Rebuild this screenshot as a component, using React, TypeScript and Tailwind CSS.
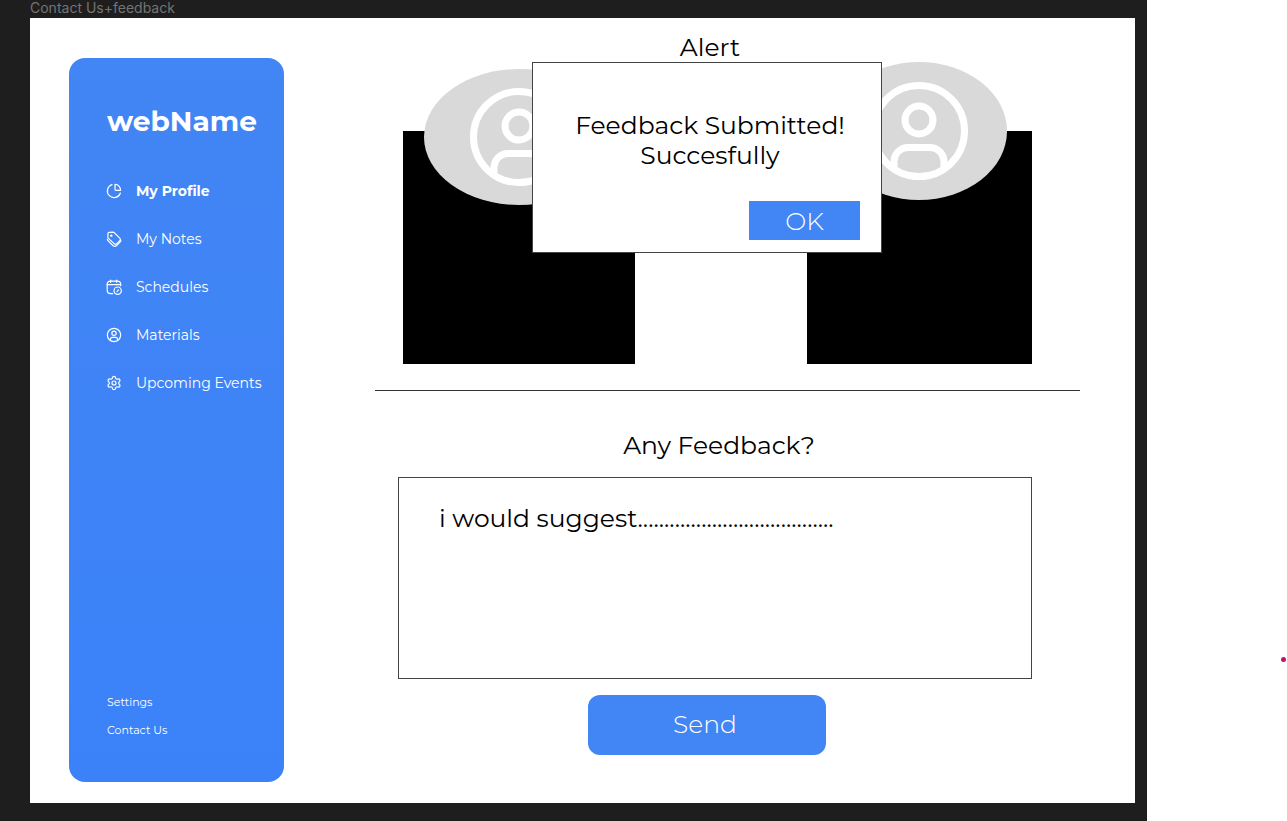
import type { ReactNode } from "react";

function Icon({ children }: { children: ReactNode }) {
  return (
    <svg
      viewBox="0 0 24 24"
      className="size-4 shrink-0"
      fill="none"
      stroke="currentColor"
      strokeWidth="1.8"
      strokeLinecap="round"
      strokeLinejoin="round"
      aria-hidden="true"
    >
      {children}
    </svg>
  );
}

const links = [
  {
    label: "My Profile",
    icon: (
      <>
        <path d="M9 2.400A10 10 0 1 0 21.600 15" />
        <path d="M21.800 11c0-5.300-3.500-8.800-8.300-8.800v7.300c0 1 .5 1.500 1.500 1.500z" />
      </>
    ),
  },
  {
    label: "My Notes",
    icon: (
      <>
        <path d="M3 3.700c0-1 .6-1.600 1.600-1.700l5.900-.4c.7 0 1.300.3 1.800.8l8.300 8.200c1.200 1.200 1.200 2.800 0 4l-4.400 4.400c-1.200 1.200-2.800 1.200-4 0L3.600 11.100c-.6-.6-.9-1.200-.8-2z" />
        <path d="M2 12.500c0 .8.300 1.400.9 2l7.300 7.300c1.700 1.500 4 1.500 5.700 0l5.500-5.600c.8-.8 1.100-1.600.8-2.600" />
        <circle cx="8" cy="7" r="0.900" />
      </>
    ),
  },
  {
    label: "Schedules",
    icon: (
      <>
        <path d="M7 1.500v3.500M16 1.500v3.500M1.800 8.500h20" />
        <path d="M22 10V8c0-3-1.500-4.800-5-4.800H7C3.500 3.200 1.800 5 1.800 8v9c0 3 1.700 5 5.200 5h3" />
        <circle cx="17.500" cy="17.500" r="5.500" />
        <path d="m16.500 18.800 2.200-2.600" />
      </>
    ),
  },
  {
    label: "Materials",
    icon: (
      <>
        <circle cx="12" cy="12" r="10" />
        <circle cx="12" cy="9.300" r="3.200" />
        <path d="M6.700 19.500v-.8c0-1.900 1.100-3 3-3h4.600c1.900 0 3 1.100 3 3v.8" />
      </>
    ),
  },
  {
    label: "Upcoming Events",
    icon: (
      <>
        <circle cx="12" cy="12" r="3" />
        <path d="M9.671 4.136a2.340 2.340 0 0 1 4.659 0 2.340 2.340 0 0 0 3.319 1.915 2.340 2.340 0 0 1 2.330 4.033 2.340 2.340 0 0 0 0 3.831 2.340 2.340 0 0 1-2.330 4.033 2.340 2.340 0 0 0-3.319 1.915 2.340 2.340 0 0 1-4.659 0 2.340 2.340 0 0 0-3.320-1.915 2.340 2.340 0 0 1-2.330-4.033 2.340 2.340 0 0 0 0-3.831A2.340 2.340 0 0 1 6.350 6.051a2.340 2.340 0 0 0 3.319-1.915" />
      </>
    ),
  },
];

function Sidebar() {
  return (
    <aside className="flex w-[215px] shrink-0 flex-col rounded-2xl bg-linear-to-b from-[#4285f4] to-[#3b82f9] pt-[45px] pb-11 pl-[38px] text-white">
      <h1 className="text-[28px] leading-9 font-bold">webName</h1>
      <nav className="mt-[42px] -ml-px flex flex-col gap-7 text-sm">
        {links.map((link, i) => (
          <a
            key={link.label}
            href="#"
            className={
              i === 0
                ? "flex items-center gap-[14px] font-bold whitespace-nowrap"
                : "flex items-center gap-[14px] whitespace-nowrap"
            }
          >
            <Icon>{link.icon}</Icon>
            {link.label}
          </a>
        ))}
      </nav>
      <nav className="mt-auto flex flex-col gap-3 text-[11px] leading-4">
        <a href="#">Settings</a>
        <a href="#">Contact Us</a>
      </nav>
    </aside>
  );
}

function Person() {
  return (
    <svg
      viewBox="0 0 98 98"
      className="size-[98px]"
      fill="none"
      stroke="#fff"
      strokeWidth="7"
      aria-hidden="true"
    >
      <circle cx="49" cy="49" r="45.500" />
      <circle cx="49" cy="38" r="14" />
      <path d="M24 85V79.500A14 14 0 0 1 38 65.500H60A14 14 0 0 1 74 79.500V85" />
    </svg>
  );
}

function Alert() {
  return (
    <div
      role="alertdialog"
      aria-labelledby="alert-title"
      aria-describedby="alert-text"
      className="w-[350px] text-center text-[25px] leading-[30px]"
    >
      <h2 id="alert-title" className="pl-[6px]">
        Alert
      </h2>
      <div className="flex h-[191px] flex-col border border-[#444] bg-white pt-[47px] pr-[21px] pb-3 pl-[27px]">
        <p id="alert-text">
          Feedback Submitted!
          <br />
          Succesfully
        </p>
        <button className="mt-auto h-[39px] w-[111px] self-end bg-[#4285f4] font-light text-white">
          OK
        </button>
      </div>
    </div>
  );
}

export default function App() {
  return (
    <div className="flex min-h-screen bg-white font-[Montserrat,Inter,sans-serif] text-black">
      <div className="flex flex-1 flex-col bg-[#1e1e1e] pr-3 pb-[18px] pl-[30px]">
        <div className="h-[18px] overflow-hidden font-[Inter,sans-serif] text-sm leading-[15px] text-[#747474]">
          Contact Us+feedback
        </div>
        <div className="flex flex-1 bg-white pt-10 pb-[21px] pl-[39px]">
          <Sidebar />
          <main className="-mt-10 mr-[55px] ml-[91px] flex flex-1 flex-col">
            <section className="relative flex justify-between border-b border-[#333] pt-[113px] pr-[48px] pb-[26px] pl-7">
              <div className="relative h-[233px] w-[232px] bg-black">
                <div className="absolute -top-[62px] left-[21px] flex h-[136px] w-[190px] items-center justify-center rounded-[50%] bg-[#d9d9d9]">
                  <Person />
                </div>
              </div>
              <div className="relative h-[233px] w-[225px] bg-black">
                <div className="absolute -top-[69px] left-6 flex h-[138px] w-[176px] items-center justify-center rounded-[50%] bg-[#d9d9d9]">
                  <Person />
                </div>
              </div>
              <div className="absolute inset-x-0 top-[14px] flex justify-center pr-[41px]">
                <Alert />
              </div>
            </section>
            <form className="flex flex-col pr-[48px] pl-[23px]" onSubmit={(e) => e.preventDefault()}>
              <label
                htmlFor="feedback"
                className="mt-[39px] mb-[17px] pl-2 text-center text-[25px] leading-[30px]"
              >
                Any Feedback?
              </label>
              <textarea
                id="feedback"
                defaultValue="i would suggest....................................."
                className="h-[202px] resize-none border border-[#444] px-10 py-[25px] text-[25px] leading-[30px] outline-none"
              />
              <button className="mt-4 mr-4 h-[60px] w-[238px] self-center rounded-xl bg-[#4285f4] pr-1 text-[25px] font-light text-white">
                Send
              </button>
            </form>
          </main>
        </div>
      </div>
      <div className="flex w-[140px] shrink-0 flex-col items-end pt-[657px] pr-px">
        <span className="size-[5px] rounded-full bg-[#b8156b]" />
      </div>
    </div>
  );
}
